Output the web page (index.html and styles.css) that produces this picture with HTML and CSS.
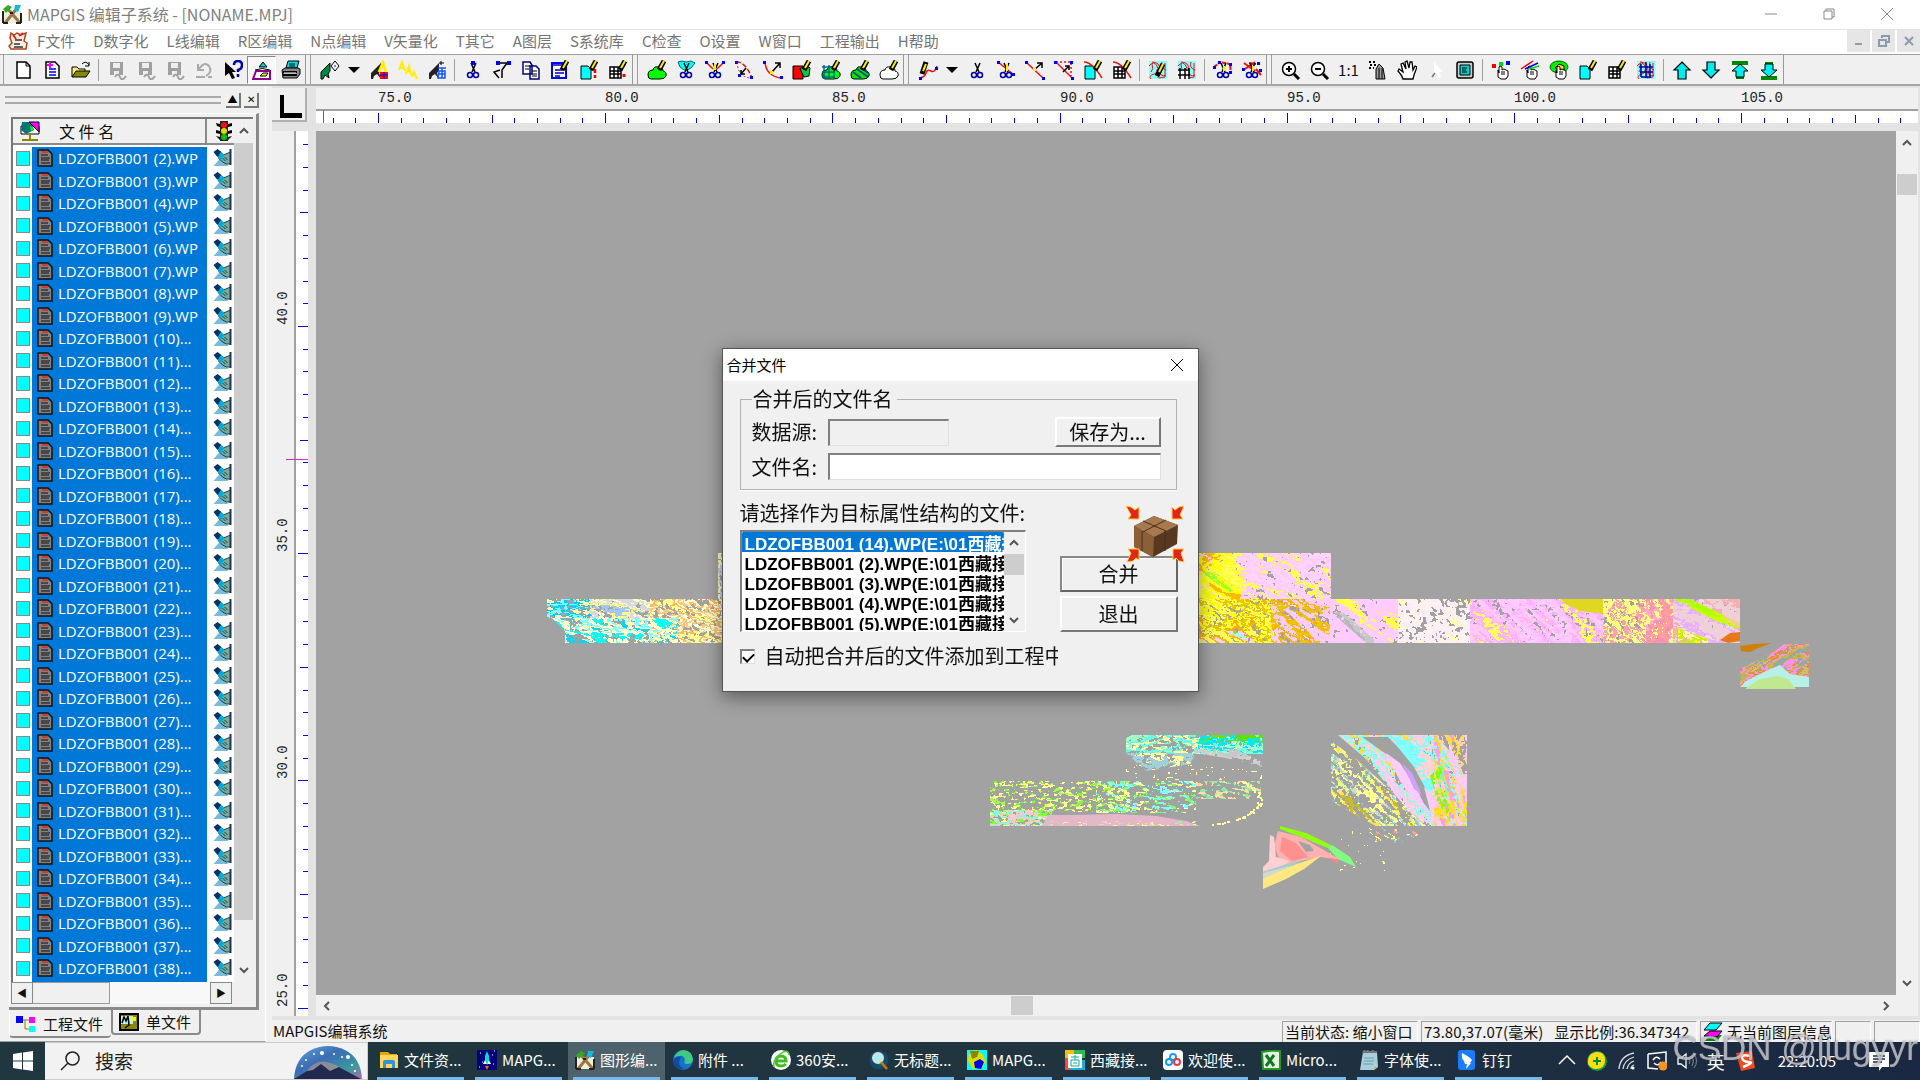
FILE: index.html
```html
<!DOCTYPE html>
<html lang="zh-CN">
<head>
  <meta charset="UTF-8">
  <title>MAPGIS 编辑子系统</title>
  <link rel="stylesheet" href="styles.css">
</head>
<body>
  <!-- icon sprite -->
  <svg class="sprite" aria-hidden="true">
    <defs>
      <g id="pencil"><path d="M17 1l-5 9" stroke="#000" stroke-width="5"/><path d="M17 1l-4 7" stroke="#fe0" stroke-width="2"/></g>
      <g id="shears" fill="none"><path d="M8 3l4 9M13 3l-4 9" stroke="#000" stroke-width="1.500"/><circle cx="7" cy="15" r="2.500" stroke="#00a" stroke-width="1.500"/><circle cx="13" cy="15" r="2.500" stroke="#00a" stroke-width="1.500"/></g>
      <g id="grid"><path d="M2 7h11v11H2z" fill="#fff" stroke="#000" stroke-width="1.500"/><path d="M2 11h11M2 14h11M6 7v11M10 7v11" stroke="#000" stroke-width="1.500"/></g>
      <g id="page"><path d="M2 6h7l3 3v10H2z" fill="#0ff" stroke="#000"/></g>
      <path id="blob" d="M1 15q0-5 5-5 1-4 5-3 5 0 5 4 4 1 3 5-1 3-6 3H4q-3 0-3-4z" stroke="#000"/>
      <g id="smallhand"><path d="M7 10v7l3 2h5l2-3v-5l-2-1-2-1-2 1V7l-2-1-1 1v6z" fill="#fff" stroke="#000"/><path d="M11 11v4M13 11v4" stroke="#000"/></g>
      <path id="arrowman" d="M2 19V13L12 3v7l-2 3 2 6-4-5-3 2-1 3z"/>
      <g id="disk"><path d="M3 2h13v13H3z" fill="#a0a0a0"/><path d="M6 3h7v5H6z" fill="#eee"/><path d="M7 11h5v4H7z" fill="#eee"/><path d="M8 17q3-5 5 0t6-1" stroke="#a0a0a0" stroke-width="2" fill="none"/></g>
      <g id="contour"><path d="M1 1h18v18H1z" fill="#8ff"/><path d="M1 6q5-6 8 0t-3 8-3 5M4 2q8 0 8 8t6 5M14 2q-2 6 4 8M8 10q5 1 2 8M3 12q3-3 1-8M17 3v14l-6 1" fill="none" stroke="#e11"/></g>
    </defs>
    <symbol id="i-app" viewBox="0 0 20 20"><path d="M1 7h18v12H1z" fill="#eed"/><path d="M3 19L16 3M18 19L5 4" stroke="#974" stroke-width="3"/><path d="M1 5l5-4 4 2-6 6z" fill="#3a2"/><path d="M13 1h6l-3 7-4-2z" fill="#1bd"/><path d="M1 19h5M14 19h5M1 7v12M19 9v10M8 9h3" stroke="#222" stroke-width="2"/></symbol>
    <symbol id="i-scroll" viewBox="0 0 20 20"><path d="M3 2l3 2 3-2 4 2 5-2-2 8 3 2-1 6H3l-2-3 3-3-2-5z" fill="#fed" stroke="#a42" stroke-width="1.500"/><path d="M7 9h7M6 13h6M6 16h9" stroke="#333" stroke-width="1.500"/><path d="M5 4l3 4M11 5l4-3" stroke="#e22" stroke-width="2"/></symbol>
    <symbol id="i-new" viewBox="0 0 20 20"><path d="M4 2h9l4 4v12H4z" fill="#fff" stroke="#000" stroke-width="1.500"/><path d="M13 2v4h4" fill="none" stroke="#000"/></symbol>
    <symbol id="i-newdoc" viewBox="0 0 20 20"><path d="M4 2h9l4 4v12H4z" fill="#fff" stroke="#000" stroke-width="1.500"/><path d="M7 9h7M7 12h7M7 15h7" stroke="#00f" stroke-width="1.500"/><path d="M5 5h6M8 2v6" stroke="#f0f" stroke-width="2"/></symbol>
    <symbol id="i-open" viewBox="0 0 20 20"><path d="M1 17V7h5l2 2h6v3" fill="#fe7" stroke="#000"/><path d="M1 17l4-6h14l-4 6z" fill="#880" stroke="#000"/><path d="M11 4q4-4 7 1m0-3v4h-4" fill="none" stroke="#000"/></symbol>
    <symbol id="i-save" viewBox="0 0 20 20"><use href="#disk"/></symbol>
    <symbol id="i-undo" viewBox="0 0 20 20"><path d="M5 9Q10 1 15 6q4 6-3 10M4 4v6h6M2 17h9M14 17h4" fill="none" stroke="#aaa" stroke-width="2"/></symbol>
    <symbol id="i-help" viewBox="0 0 20 20"><path d="M2 2v14l4-3 3 6 3-1-3-6h4z" fill="#000"/><path d="M11 5q0-4 4-4t4 4-4 5v2M15 14v3" fill="none" stroke="#00a" stroke-width="2.500"/></symbol>
    <symbol id="i-gis" viewBox="0 0 20 20"><path d="M7 7l4-5 4 5z" fill="#0cc" stroke="#000"/><path d="M3 10q7-3 15 0" fill="none" stroke="#000"/><path d="M1 19l3-8h14v8z" fill="#fff" stroke="#808" stroke-width="2"/><path d="M8 16l3-3h5l-2 3z" fill="#fe0" stroke="#000"/></symbol>
    <symbol id="i-print" viewBox="0 0 20 20"><path d="M5 8l2-7h11l-2 7z" fill="#0dd" stroke="#000"/><path d="M1 10l3-2h13l2 1v5l-3 4H2z" fill="#888" stroke="#000"/><path d="M2 12h14M2 15h14" stroke="#000" stroke-width="2"/><path d="M3 13h12" stroke="#fff"/><path d="M8 4h6M8 6h6" stroke="#000"/></symbol>
    <symbol id="i-flag" viewBox="0 0 20 20"><path d="M1 19v-7L10 3v8l-2 3 1 4-4-3-2 4z" fill="#084" stroke="#000"/><path d="M11 6l4-5 4 5-4 5z" fill="#fff" stroke="#000"/><path d="M14 6h2" stroke="#00f"/></symbol>
    <symbol id="i-flaga" viewBox="0 0 20 20"><use href="#arrowman" fill="#222"/><path d="M10 12l4-9 3 9" fill="none" stroke="#fe0" stroke-width="3"/><path d="M11 12h8v7h-8z" fill="#e11"/><path d="M11 15h8M15 12v7" stroke="#00f"/></symbol>
    <symbol id="i-aa" viewBox="0 0 20 20"><path d="M1 10L4 2l3 9M2 8h4M8 14l3-8 2 9M9 11h3M14 17l2-5 3 7" fill="none" stroke="#fe0" stroke-width="2"/></symbol>
    <symbol id="i-flagw" viewBox="0 0 20 20"><use href="#arrowman" fill="#222"/><path d="M14 1v4M12 3h5" stroke="#000"/><path d="M11 8h8M12 11h6v7h-7zM12 14h6M15 8v10" fill="none" stroke="#15f" stroke-width="1.500"/></symbol>
    <symbol id="i-cutpt" viewBox="0 0 20 20"><use href="#shears"/><path d="M8 1h4v4H8z" fill="#00f"/></symbol>
    <symbol id="i-node" viewBox="0 0 20 20"><path d="M5 3h12M15 3L10 10v8M8 10l-6 2 5 6" fill="none" stroke="#000" stroke-width="1.500"/><path d="M4 1h4v4H4zM15 1h4v4h-4z" fill="#00f"/></symbol>
    <symbol id="i-copy" viewBox="0 0 20 20"><path d="M2 2h7l2 3v9H2zM9 6h6l3 3v10H9z" fill="#fff" stroke="#000080" stroke-width="1.500"/><path d="M4 6h5M4 9h4M11 11h5M11 14h5M11 16h5" stroke="#000"/></symbol>
    <symbol id="i-text" viewBox="0 0 20 20"><path d="M2 3h14v15H2z" fill="#fff" stroke="#00f" stroke-width="2"/><path d="M2 5h14M5 10h8M5 13h9M5 16h5" stroke="#00a" stroke-width="1.500"/><use href="#pencil"/></symbol>
    <symbol id="i-pagep" viewBox="0 0 20 20"><use href="#page"/><use href="#pencil"/></symbol>
    <symbol id="i-pager" viewBox="0 0 20 20"><use href="#page"/><use href="#pencil"/><path d="M16 9v4M16 15v3" stroke="#e00" stroke-width="2.500"/></symbol>
    <symbol id="i-gridp" viewBox="0 0 20 20"><use href="#grid"/><use href="#pencil"/></symbol>
    <symbol id="i-gridr" viewBox="0 0 20 20"><use href="#grid"/><use href="#pencil"/><path d="M16 14v3" stroke="#e00" stroke-width="3"/></symbol>
    <symbol id="i-area" viewBox="0 0 20 20"><use href="#blob" fill="#0f0"/><use href="#pencil"/></symbol>
    <symbol id="i-areacut" viewBox="0 0 20 20"><path d="M2 2l4-1 4 1 5-1 4 2-4 5-4 2H8L4 7z" fill="#0ff" stroke="#066"/><use href="#shears"/></symbol>
    <symbol id="i-arccut" viewBox="0 0 20 20"><path d="M1 2l7 7M19 2l-7 7" stroke="#e11" stroke-width="1.500"/><path d="M0 1h3v3H0zM17 1h3v3h-3z" fill="#00f"/><use href="#shears"/><path d="M10 4v6" stroke="#fe0" stroke-width="2"/></symbol>
    <symbol id="i-arcmove" viewBox="0 0 20 20"><path d="M2 2q9-1 16 16" fill="none" stroke="#e11" stroke-width="1.500" stroke-dasharray="5 2"/><path d="M3 2q1 16 15 16" fill="none" stroke="#e11" stroke-dasharray="2 2"/><path d="M12 8l-5 6m0-4v4h4" fill="none" stroke="#000" stroke-width="1.500"/><path d="M1 1h3v3H1zM16 16h3v3h-3zM4 14h3v3H4z" fill="#00f"/></symbol>
    <symbol id="i-arcadd" viewBox="0 0 20 20"><path d="M2 2q1 14 16 16" fill="none" stroke="#e11" stroke-width="1.500"/><path d="M9 12l8-9m-5 0h5v5" fill="none" stroke="#000" stroke-width="1.500"/><path d="M7 11h3v3H7z" fill="#fe0"/><path d="M0 1h3v3H0zM17 16h3v3h-3z" fill="#00f"/></symbol>
    <symbol id="i-arearep" viewBox="0 0 20 20"><path d="M1 6h10v13H1z" fill="#f00" stroke="#000"/><path d="M8 9l6-4 4 3-1 8-5 1z" fill="#0c4" stroke="#000"/><use href="#pencil"/></symbol>
    <symbol id="i-areagrid" viewBox="0 0 20 20"><use href="#blob" fill="#0f0"/><path d="M1 7h13M1 12h13M1 17h13M3 5v14M8 5v14M13 5v14" stroke="#068" stroke-width="1.500"/><use href="#pencil"/></symbol>
    <symbol id="i-areahatch" viewBox="0 0 20 20"><use href="#blob" fill="#0e0"/><path d="M3 12l8 6M7 9l11 8M12 8l6 5" stroke="#048" stroke-width="2"/><use href="#pencil"/></symbol>
    <symbol id="i-areaempty" viewBox="0 0 20 20"><use href="#blob" fill="#fff"/><use href="#pencil"/></symbol>
    <symbol id="i-line" viewBox="0 0 20 20"><path d="M2 18q5-1 6-5t5-2 6-5" fill="none" stroke="#e11" stroke-width="1.500"/><path d="M8 2L4 14" stroke="#000" stroke-width="5"/><path d="M8 4L5 11" stroke="#fe0" stroke-width="2"/><path d="M1 17h3v3H1zM17 7h3v3h-3z" fill="#00f"/></symbol>
    <symbol id="i-cut" viewBox="0 0 20 20"><use href="#shears"/></symbol>
    <symbol id="i-linecut" viewBox="0 0 20 20"><path d="M2 2l16 13" stroke="#e11" stroke-width="1.500"/><use href="#shears"/><path d="M11 4v7" stroke="#fe0" stroke-width="2"/><path d="M1 1h3v3H1zM16 13h3v3h-3z" fill="#00f"/></symbol>
    <symbol id="i-lineadd" viewBox="0 0 20 20"><path d="M1 2l17 16" stroke="#e11" stroke-width="1.500"/><path d="M9 10l8-7m-5 0h5v5" fill="none" stroke="#000" stroke-width="1.500"/><path d="M8 8h3v3H8z" fill="#fe0"/><path d="M0 1h3v3H0zM17 17h3v3h-3z" fill="#00f"/></symbol>
    <symbol id="i-linemove" viewBox="0 0 20 20"><path d="M2 2h15v14" fill="none" stroke="#e11" stroke-width="1.500" stroke-dasharray="2 2"/><path d="M2 2l16 16" stroke="#e11" stroke-width="1.500"/><path d="M9 12l6-6m-4 0h4v4" fill="none" stroke="#000" stroke-width="1.500"/><path d="M0 1h3v3H0zM17 17h3v3h-3zM16 1h3v3h-3z" fill="#00f"/></symbol>
    <symbol id="i-linepage" viewBox="0 0 20 20"><use href="#page"/><path d="M1 2q8 0 18 16" fill="none" stroke="#e11" stroke-width="1.500"/><use href="#pencil"/></symbol>
    <symbol id="i-linegrid" viewBox="0 0 20 20"><use href="#grid"/><path d="M1 2q8 0 18 16" fill="none" stroke="#e11" stroke-width="1.500"/><use href="#pencil"/></symbol>
    <symbol id="i-contour" viewBox="0 0 20 20"><use href="#contour"/><path d="M15 4l-6 12" stroke="#000" stroke-width="5"/><path d="M15 4l-4 8" stroke="#fe0" stroke-width="2"/></symbol>
    <symbol id="i-contgrid" viewBox="0 0 20 20"><use href="#contour"/><path d="M1 9h11v10H1z" fill="#fff"/><path d="M1 10h12M1 15h12M3 8v11M8 8v11M12 8v11" stroke="#000" stroke-width="1.500"/></symbol>
    <symbol id="i-topocut" viewBox="0 0 20 20"><path d="M1 7l6-5 10 2 1 9" fill="none" stroke="#e11" stroke-width="2" stroke-dasharray="4 1"/><path d="M5 1h3v3H5zM16 3h3v3h-3zM0 6h3v3H0zM16 11h3v3h-3z" fill="#00f"/><use href="#shears"/><path d="M11 6v5" stroke="#fe0" stroke-width="2"/></symbol>
    <symbol id="i-topocut2" viewBox="0 0 20 20"><path d="M2 3l11 8M13 2L3 9M14 9l5 6M7 3l7 1" fill="none" stroke="#e11" stroke-width="2"/><path d="M15 2h3v3h-3zM0 8h3v3H0zM17 9h3v3h-3z" fill="#00f"/><use href="#shears"/><path d="M11 6v5" stroke="#fe0" stroke-width="2"/></symbol>
    <symbol id="i-zoomin" viewBox="0 0 20 20"><circle cx="8" cy="9" r="6.500" fill="#fff" stroke="#000" stroke-width="1.500"/><path d="M5 9h6M8 6v6" stroke="#000" stroke-width="2"/><path d="M13 14l5 5" stroke="#000" stroke-width="3"/></symbol>
    <symbol id="i-zoomout" viewBox="0 0 20 20"><circle cx="8" cy="9" r="6.500" fill="#fff" stroke="#000" stroke-width="1.500"/><path d="M5 9h6" stroke="#000" stroke-width="2"/><path d="M13 14l5 5" stroke="#000" stroke-width="3"/></symbol>
    <symbol id="i-spray" viewBox="0 0 20 20"><path d="M8 19V9l3-5 4 4 2 11z" fill="#999" stroke="#000"/><path d="M11 8v11M14 8v11" stroke="#000"/><path d="M1 2h2M5 2h2M2 5h2M6 5h2M1 8h2M5 8h1" stroke="#000" stroke-width="2"/></symbol>
    <symbol id="i-hand" viewBox="0 0 20 20"><path d="M6 19q-1-4-5-8l1-2 4 3-2-8 2-1 3 6-1-7 2-1 2 7 1-6h2l1 8 2-4 2 1-3 8-1 4z" fill="#fff" stroke="#000" stroke-width="1.300"/></symbol>
    <symbol id="i-cursor" viewBox="0 0 20 20"><path d="M8 2v14l3-3 2 5 2-1-2-5h4z" fill="#fff"/><path d="M6 17l3-4" stroke="#777" stroke-width="1.500"/></symbol>
    <symbol id="i-screen" viewBox="0 0 20 20"><rect x="2" y="2" width="16" height="16" rx="2" fill="#ccc" stroke="#000" stroke-width="1.500"/><path d="M5 5h10v10H5z" fill="#0cc" stroke="#000"/><path d="M7 8h5M7 10h4M7 12h5" stroke="#000"/></symbol>
    <symbol id="i-pickpt" viewBox="0 0 20 20"><use href="#smallhand"/><path d="M1 4h4v4H1z" fill="#e00"/><path d="M8 2h4v4H8z" fill="#0d0"/><path d="M15 1h4v4h-4z" fill="#00f"/></symbol>
    <symbol id="i-pickline" viewBox="0 0 20 20"><use href="#smallhand"/><path d="M1 9L13 1" stroke="#e00" stroke-width="1.500"/><path d="M5 9l13-6" stroke="#00f" stroke-width="1.500"/><path d="M9 9l10-3" stroke="#0d0" stroke-width="1.500"/></symbol>
    <symbol id="i-pickarea" viewBox="0 0 20 20"><ellipse cx="10" cy="7" rx="9" ry="6" fill="#0e0" stroke="#060"/><path d="M6 8l4-4 5 2v4z" fill="#fe0" stroke="#000"/><use href="#smallhand"/></symbol>
    <symbol id="i-pickall" viewBox="0 0 20 20"><use href="#contour"/><path d="M3 7h14M4 12h13M10 2v16M5 17h10M5 4v13M14 4v13" stroke="#009" stroke-width="1.500"/></symbol>
    <symbol id="i-up" viewBox="0 0 20 20"><path d="M10 2l8 8h-4v9H6v-9H2z" fill="#0ee" stroke="#000" stroke-width="1.200"/></symbol>
    <symbol id="i-down" viewBox="0 0 20 20"><path d="M10 18l8-8h-4V2H6v8H2z" fill="#0ee" stroke="#000" stroke-width="1.200"/></symbol>
    <symbol id="i-top" viewBox="0 0 20 20"><path d="M2 1h16v4H2zM6 16h8v3H6z" fill="#080"/><path d="M10 4l8 7h-4v6H6v-6H2z" fill="#0ee" stroke="#000"/></symbol>
    <symbol id="i-bottom" viewBox="0 0 20 20"><path d="M2 16h16v4H2zM6 2h8v3H6z" fill="#080"/><path d="M10 17l8-7h-4V4H6v6H2z" fill="#0ee" stroke="#000"/></symbol>

    <symbol id="i-book" viewBox="0 0 20 20"><path d="M1 5h18v8H1z" fill="#fff" stroke="#000"/><path d="M2 1h8l4 8-8 4-5-4z" fill="#077"/><path d="M9 1h10v10z" fill="#f0f" stroke="#000"/><path d="M10 5l4 2-3 4z" fill="#0f0"/><path d="M2 19h16M10 12v6" stroke="#880" stroke-width="2"/></symbol>
    <symbol id="i-light" viewBox="0 0 16 20"><path d="M0 2l4 1v3L1 5zM16 2l-4 1v3l4-1zM0 9l4 1v3l-4-1zM16 9l-4 1v3l4-1zM0 15l4 1v3zM16 15l-4 1v3z" fill="#000"/><path d="M4 0h8v20H4z" fill="#222"/><circle cx="8" cy="4" r="3" fill="#e11"/><circle cx="8" cy="10" r="3" fill="#dd0"/><circle cx="8" cy="16" r="3" fill="#0c0"/></symbol>
    <symbol id="i-doc" viewBox="0 0 16 18"><path d="M1 1h10l4 4v12H1z" fill="#808080" stroke="#111" stroke-width="1.500"/><path d="M5 3h6" stroke="#e22" stroke-width="1.500"/><path d="M4 6h7M4 9h9M4 11h8M4 14h9" stroke="#111"/></symbol>
    <symbol id="i-edit" viewBox="0 0 18 18"><path d="M0 17l7-8 8 8z" fill="#7bd"/><path d="M5 6h5l7-3v12h-4l-4-2-4-4z" fill="#7a9" stroke="#145"/><path d="M0 3l4-3 4 3-4 5z" fill="#036"/><path d="M4 8l4-5 3 3-4 5z" fill="#0ad"/><path d="M17 0v16" stroke="#235" stroke-width="2"/><path d="M9 9l3 3M11 8l3 3" stroke="#245"/></symbol>
    <symbol id="i-tree" viewBox="0 0 20 18"><path d="M7 5h6M9 5v9h5" fill="none" stroke="#880"/><path d="M0 1h7v7H0z" fill="#00f"/><path d="M13 2h6v6h-6z" fill="#f0f"/><path d="M13 11h6v6h-6z" fill="#0ff"/></symbol>
    <symbol id="i-single" viewBox="0 0 20 18"><path d="M1 1h18v16H1z" fill="#880" stroke="#000" stroke-width="2"/><path d="M2 3h12v8H2z" fill="#bee"/><path d="M3 10l2-6 2 4 2-5 1 9-4 3" fill="none" stroke="#000" stroke-width="1.500"/><path d="M13 4h4v4h-4z" fill="#fe0"/></symbol>
    <symbol id="i-layers" viewBox="0 0 20 20"><path d="M2 19l5-6h12l-5 6z" fill="#080"/><path d="M1 14l6-5h12l-5 6z" fill="#f0f" stroke="#000"/><path d="M1 8l6-7h12l-6 7z" fill="#0ff" stroke="#000"/></symbol>

    <symbol id="i-folder" viewBox="0 0 20 20"><path d="M1 2h8l2 2h7v5H1z" fill="#e5a50a"/><path d="M1 5h18v13H1z" fill="#ffd65c"/><path d="M4 18v-6q0-2 2-2h8q2 0 2 2v6h-3v-4H7v4z" fill="#2f93dd"/></symbol>
    <symbol id="i-rocket" viewBox="0 0 20 20"><path d="M0 0h20v20H0z" fill="#01017a"/><path d="M3 3h1M15 5h1M5 12h1M16 14h1M2 17h1M17 1h1" stroke="#fff"/><path d="M10 1l2 5v8H8V6z" fill="#0dd"/><path d="M6 14l2-4 2 5 2-5 2 4z" fill="#fff"/><path d="M8 16h4l-2 4z" fill="#f60"/></symbol>
    <symbol id="i-edge" viewBox="0 0 20 20"><circle cx="10" cy="10" r="10" fill="#1573c9"/><path d="M1 8Q4 0 11 0q8 1 9 9 0 5-6 5-4 0-2-4-1-5-6-4-3 0-5 2z" fill="#41c983"/><path d="M7 9q-3 6 4 10-9 1-11-8 2-5 8-4z" fill="#114a9e"/></symbol>
    <symbol id="i-360" viewBox="0 0 20 20"><circle cx="10" cy="10" r="10" fill="#fff"/><path d="M5 11h10q0-5-5-5t-5 5 5 5q3 0 5-2" fill="none" stroke="#4b2" stroke-width="3"/><path d="M3 17q-2-7 6-13t9 1" fill="none" stroke="#5c3" stroke-width="1.500"/></symbol>
    <symbol id="i-lens" viewBox="0 0 20 20"><circle cx="10" cy="10" r="9.500" fill="#124b70"/><path d="M2 9q5-6 9-3l5 6-5 5z" fill="#164"/><circle cx="9" cy="8" r="5" fill="#aee" stroke="#ddd" stroke-width="2"/><path d="M12 12l6 7" stroke="#c71" stroke-width="2.500"/></symbol>
    <symbol id="i-mapgis" viewBox="0 0 20 20"><path d="M0 0h20v20H0z" fill="#0ff"/><path d="M2 3l7-3 6 4 4 7-4 7-9 1-5-8z" fill="#dd0"/><path d="M3 1h9l-2 6-5 2z" fill="#880"/><path d="M7 12l6-3 4 3-3 7-6-1z" fill="#00e"/></symbol>
    <symbol id="i-xizang" viewBox="0 0 20 20"><path d="M0 0h7v20H0z" fill="#f44"/><path d="M5 0h15v8H5z" fill="#3b5"/><path d="M0 0h9v8H0z" fill="#fb0"/><path d="M4 10h16v10H4z" fill="#2ad"/><rect x="3" y="4" width="14" height="14" fill="#fff"/><path d="M6 7h8M10 5v5M6 10h8v6H6zM8 13h4" fill="none" stroke="#1a9"/></symbol>
    <symbol id="i-baidu" viewBox="0 0 20 20"><rect width="20" height="20" rx="4" fill="#fff"/><circle cx="10" cy="7" r="3" fill="none" stroke="#29f" stroke-width="2"/><circle cx="6" cy="12" r="3" fill="none" stroke="#19e" stroke-width="2"/><circle cx="14" cy="12" r="3" fill="none" stroke="#e34" stroke-width="2"/></symbol>
    <symbol id="i-excel" viewBox="0 0 20 20"><path d="M1 2q9-2 18-1v18H2z" fill="#e6f2df" stroke="#292" stroke-width="2"/><path d="M5 5l8 11M13 5L5 16" stroke="#172" stroke-width="3"/></symbol>
    <symbol id="i-note" viewBox="0 0 20 20"><path d="M4 2h14l1 15-4 3H1z" fill="#a8cfdc"/><path d="M4 2h14M4 3l2-3M8 3l1-3M13 3l1-3" stroke="#777" stroke-width="2"/><path d="M5 8h10M5 11h10M4 14h10" stroke="#6a9eb0"/><path d="M19 17l-4 3v-3z" fill="#ca7"/></symbol>
    <symbol id="i-ding" viewBox="0 0 20 20"><rect x="1" width="17" height="20" rx="3" fill="#1a7cff"/><path d="M5 3q8 4 10 7l-2 3h1l-5 6 1-5H8l-1-3q-3-3-2-8z" fill="#fff"/></symbol>
  </svg>

  <header class="titlebar">
    <svg class="ico"><use href="#i-app"/></svg>
    <span class="title">MAPGIS 编辑子系统 - [NONAME.MPJ]</span>
    <div class="win-controls">
      <button aria-label="最小化"><svg viewBox="0 0 12 12"><path d="M0 6h12"/></svg></button>
      <button aria-label="还原"><svg viewBox="0 0 12 12"><path d="M3 3V1h8v8H9M1 3h8v8H1z"/></svg></button>
      <button aria-label="关闭"><svg viewBox="0 0 12 12"><path d="M0 0l12 12M12 0L0 12"/></svg></button>
    </div>
  </header>

  <nav class="menubar">
    <svg class="ico"><use href="#i-scroll"/></svg>
    <a href="#">F文件</a>
    <a href="#">D数字化</a>
    <a href="#">L线编辑</a>
    <a href="#">R区编辑</a>
    <a href="#">N点编辑</a>
    <a href="#">V矢量化</a>
    <a href="#">T其它</a>
    <a href="#">A图层</a>
    <a href="#">S系统库</a>
    <a href="#">C检查</a>
    <a href="#">O设置</a>
    <a href="#">W窗口</a>
    <a href="#">工程输出</a>
    <a href="#">H帮助</a>
    <div class="mdi-controls">
      <button aria-label="最小化子窗口"><svg viewBox="0 0 12 12"><path d="M2 9h7"/></svg></button>
      <button aria-label="还原子窗口"><svg viewBox="0 0 12 12"><path d="M4 3V1h7v6H9M1 5h7v6H1z"/></svg></button>
      <button aria-label="关闭子窗口"><svg viewBox="0 0 12 12"><path d="M2 2l8 8M10 2l-8 8"/></svg></button>
    </div>
  </nav>

  <div class="toolbar" id="toolbar"></div>

  <main class="workspace">
    <aside class="dock">
      <div class="dock-head">
        <div class="grip"></div>
        <button aria-label="收起">▲</button>
        <button aria-label="关闭">✕</button>
      </div>
      <div class="dock-frame">
        <div class="list-row">
          <div class="list">
            <div class="list-head">
              <div class="col-name"><svg class="ico"><use href="#i-book"/></svg><span>文 件 名</span></div>
              <div class="col-state"><svg><use href="#i-light"/></svg></div>
            </div>
            <ul class="files" id="files"></ul>
          </div>
          <div class="vscroll">
            <svg class="chev" viewBox="0 0 10 10"><path d="M1 7l4-4 4 4"/></svg>
            <div class="thumb"></div>
            <svg class="chev" viewBox="0 0 10 10"><path d="M1 3l4 4 4-4"/></svg>
          </div>
        </div>
        <div class="old-hscroll">
          <button aria-label="向左">◀</button>
          <div class="thumb"></div>
          <button aria-label="向右">▶</button>
        </div>
      </div>
      <div class="tabs">
        <button class="tab active"><svg><use href="#i-tree"/></svg>工程文件</button>
        <button class="tab"><svg><use href="#i-single"/></svg>单文件</button>
      </div>
    </aside>

    <section class="view">
      <div class="top-row">
        <div class="corner"></div>
        <svg class="ruler-top" id="rulerTop"></svg>
      </div>
      <div class="mid-row">
        <svg class="ruler-left" id="rulerLeft"></svg>
        <div class="map-col">
          <div class="map-row">
            <div class="map" id="map"><canvas id="mapCanvas"></canvas></div>
            <div class="vscroll">
              <svg class="chev" viewBox="0 0 10 10"><path d="M1 7l4-4 4 4"/></svg>
              <div class="thumb"></div>
              <svg class="chev" viewBox="0 0 10 10"><path d="M1 3l4 4 4-4"/></svg>
            </div>
          </div>
          <div class="hscroll">
            <svg class="chev" viewBox="0 0 10 10"><path d="M7 1L3 5l4 4"/></svg>
            <div class="thumb"></div>
            <svg class="chev" viewBox="0 0 10 10"><path d="M3 1l4 4-4 4"/></svg>
          </div>
        </div>
      </div>
      <footer class="status">
        <span class="status-text">MAPGIS编辑系统</span>
        <span class="pane pane-state">当前状态: 缩小窗口</span>
        <span class="pane pane-coord"><span>73.80,37.07(毫米)</span><span>显示比例:36.347342</span></span>
        <span class="pane pane-layer"><svg class="ico"><use href="#i-layers"/></svg>无当前图层信息</span>
        <span class="pane pane-small"></span>
        <span class="pane pane-last"></span>
      </footer>
    </section>
  </main>

  <div class="taskbar">
    <button class="start" aria-label="开始"><svg viewBox="0 0 20 20"><path d="M0 3l9-1.500v8H0zM10 1.400L20 0v9.500H10zM0 10.500h9v8L0 17zM10 10.500h10V20l-10-1.400z" fill="#fff"/></svg></button>
    <div class="search">
      <svg class="search-ico" viewBox="0 0 20 20"><circle cx="12.500" cy="7.500" r="6.500"/><path d="M8 12l-7 7"/></svg>
      <input type="text" value="搜索" aria-label="搜索">
      <svg class="search-art" viewBox="0 0 68 33">
        <defs>
          <linearGradient id="sky" x1="0" x2="1" y1="0" y2="1"><stop offset="0" stop-color="#5da8de"/><stop offset=".4" stop-color="#3c6db4"/><stop offset=".75" stop-color="#3a9b9c"/><stop offset="1" stop-color="#b56aa5"/></linearGradient>
        </defs>
        <path d="M0 33Q1 12 17 4q17-8 34 0 16 8 17 29z" fill="url(#sky)"/>
        <path d="M8 33q10-20 25-17t26 17z" fill="#d49a8c" opacity=".5"/>
        <path d="M0 33l13-8 6-1 8-6 9 7 9-4 22 12z" fill="#23284f"/>
        <g fill="#fff"><circle cx="20" cy="8" r="1"/><circle cx="28" cy="7" r="2"/><circle cx="40" cy="8" r="1"/><circle cx="48" cy="11" r="1"/><circle cx="54" cy="11" r="2"/><circle cx="58" cy="19" r="1"/><circle cx="12" cy="14" r="1"/><circle cx="8" cy="20" r="1"/><circle cx="61" cy="25" r="1"/></g>
      </svg>
    </div>
    <div class="tasks" id="tasks"></div>
    <div class="tray">
      <svg viewBox="0 0 20 20"><path d="M2 13l8-8 8 8" fill="none" stroke="#fff" stroke-width="1.500"/></svg>
      <svg viewBox="0 0 20 20"><circle cx="10" cy="10" r="10" fill="#0b9f4a"/><path d="M1 13Q0 2 10 1q8 0 8 8 0 9-9 9-5 0-8-5z" fill="#fd1"/><path d="M10 6v8M6 10h8" stroke="#084" stroke-width="2"/></svg>
      <svg viewBox="0 0 20 20"><path d="M2 18Q3 5 17 2M6 18q1-9 11-12M10 18q1-6 7-8M14 18q0-3 3-4" fill="none" stroke="#ddd" stroke-width="1.300"/><circle cx="16" cy="17" r="1.500" fill="#fff"/></svg>
      <svg viewBox="0 0 20 20"><path d="M1 3l18-2v12M1 3v14l10 1" fill="none" stroke="#fff" stroke-width="1.500"/><path d="M6 9q3-5 7-1M14 11q-3 5-7 1" fill="none" stroke="#fff" stroke-width="1.500"/><circle cx="16" cy="15" r="4.500" fill="#f7941d"/></svg>
      <svg viewBox="0 0 20 20"><path d="M1 7h3l5-4v14l-5-4H1z" fill="none" stroke="#fff" stroke-width="1.300"/><path d="M12 7q2 3 0 6M15 5q3 5 0 10M17 3q5 7 0 14" fill="none" stroke="#7b8797"/></svg>
      <span class="ime">英</span>
      <svg viewBox="0 0 20 20"><path d="M1 2l16-2 3 17-14 3z" fill="#f04a1d"/><path d="M15 5Q6 3 7 7t7 4-6 5" fill="none" stroke="#fff" stroke-width="2.500"/></svg>
      <span class="clock">22:20:05</span>
      <svg class="notify" viewBox="0 0 20 20"><path d="M0 1h20v15h-7l-3 4v-4H0z" fill="#fff"/><path d="M4 5h12M4 8h12M4 11h9" stroke="#1b2b40" stroke-width="1.500"/></svg>
    </div>
  </div>

  <div class="overlay">
    <div class="dialog" role="dialog" aria-labelledby="dlgTitle">
      <div class="dialog-title">
        <span id="dlgTitle">合并文件</span>
        <button aria-label="关闭"><svg viewBox="0 0 12 12"><path d="M0 0l12 12M12 0L0 12"/></svg></button>
      </div>
      <form class="dialog-body">
        <fieldset>
          <legend>合并后的文件名</legend>
          <div class="field">
            <label for="source">数据源:</label>
            <input type="text" id="source" class="source" disabled>
            <button type="button" class="btn btn-save">保存为...</button>
          </div>
          <div class="field">
            <label for="fname">文件名:</label>
            <input type="text" id="fname" class="fname">
          </div>
        </fieldset>
        <label class="list-label" for="target">请选择作为目标属性结构的文件:</label>
        <div class="merge-row">
          <div class="listbox">
            <select id="target" size="5">
              <option selected>LDZOFBB001 (14).WP(E:\01西藏接图</option>
              <option>LDZOFBB001 (2).WP(E:\01西藏接图</option>
              <option>LDZOFBB001 (3).WP(E:\01西藏接图</option>
              <option>LDZOFBB001 (4).WP(E:\01西藏接图</option>
              <option>LDZOFBB001 (5).WP(E:\01西藏接图</option>
            </select>
            <div class="vscroll">
              <svg class="chev" viewBox="0 0 10 10"><path d="M1 7l4-4 4 4"/></svg>
              <div class="thumb"></div>
              <svg class="chev" viewBox="0 0 10 10"><path d="M1 3l4 4 4-4"/></svg>
            </div>
          </div>
          <div class="actions">
            <button type="button" class="btn btn-default">合并</button>
            <button type="button" class="btn">退出</button>
            <svg class="box-art" viewBox="0 0 60 58">
              <path d="M9 21l20-10 24 9-1 19-24 13L9 42z" fill="#573820"/>
              <path d="M9 21l20-10 24 9-24 12z" fill="#a67a4e"/>
              <path d="M9 21l20 11-1 20L9 42z" fill="#8c5f38"/>
              <path d="M17 26v20M40 26v20M18 16l23 10M41 15L18 27" stroke="#4b2f18" fill="none"/>
              <g fill="#e1251b" stroke="#fc3" stroke-width="1"><path d="M1 1l5 1 4 3 4-3v12H3l3-4z"/><path d="M59 1l-5 1-4 3-3-3v12h11l-3-4z"/><path d="M2 57l6-1 3-3 3 2V44H3l3 4z"/><path d="M59 57l-5-1-3-3-3 2V44h11l-3 4z"/></g>
            </svg>
          </div>
        </div>
        <div class="check-row">
          <input type="checkbox" id="autoAdd" checked>
          <label for="autoAdd">自动把合并后的文件添加到工程中</label>
        </div>
      </form>
    </div>
  </div>

  <div class="watermark">CSDN @liugyyr</div>

  <script src="script.js"></script>
</body>
</html>
```
FILE: styles.css
```css
* {
  box-sizing: border-box;
}

body {
  margin: 0;
  height: 100vh;
  display: flex;
  flex-direction: column;
  overflow: hidden;
  background: #f0f0f0;
  font-family: "Noto Sans CJK SC", sans-serif;
  font-size: 15px;
  line-height: 20px;
  color: #111;
}

button,
input,
select {
  font: inherit;
  color: inherit;
}

button {
  padding: 0;
  border: none;
  background: none;
}

.sprite {
  position: absolute;
  width: 0;
  height: 0;
}

.ico {
  width: 20px;
  height: 20px;
  flex: none;
}

/* title bar */
.titlebar {
  display: flex;
  align-items: center;
  height: 30px;
  padding: 0 4px 2px 2px;
  background: #fff;
  border-bottom: 1px solid #e3e3e3;
  flex: none;
}

.title {
  margin-left: 5px;
  color: #808080;
  font-size: 16px;
}

.win-controls,
.mdi-controls {
  display: flex;
  margin-left: auto;
}

.win-controls button {
  width: 58px;
  height: 26px;
}

.win-controls svg,
.dialog-title svg {
  width: 12px;
  height: 12px;
  overflow: visible;
  fill: none;
  stroke: #888;
}

/* menu */
.menubar {
  display: flex;
  align-items: center;
  height: 25px;
  padding: 0 0 2px 8px;
  background: #fff;
  border-bottom: 1px solid #a0a0a0;
  flex: none;
}

.menubar a {
  padding: 0 9px;
  color: #757575;
  text-decoration: none;
}

.mdi-controls {
  gap: 2px;
}

.mdi-controls button {
  width: 23px;
  height: 22px;
  background: #e6e6e6;
}

.mdi-controls svg {
  width: 12px;
  height: 12px;
  fill: none;
  stroke: #8b9bab;
  stroke-width: 2;
}

/* toolbar */
.toolbar {
  display: flex;
  height: 31px;
  padding-left: 3px;
  border-bottom: 2px solid #a6a6a6;
  flex: none;
}

.tool-group {
  display: flex;
  align-items: center;
  padding-left: 5px;
  border-right: 1px solid #999;
  box-shadow: inset 1px 0 #a0a0a0;
  margin-right: 4px;
}

.tool {
  display: flex;
  align-items: center;
  justify-content: center;
  width: 29px;
  height: 28px;
}

.tool svg {
  width: 20px;
  height: 20px;
}

.tool.pressed {
  background: #f8f8f8;
  border: 1px solid;
  border-color: #888 #fff #fff #888;
}

.tool-drop {
  width: 20px;
}

.tool-drop svg {
  width: 12px;
}

.tool-sep {
  width: 1px;
  height: 22px;
  margin: 0 3px;
  background: #a0a0a0;
}

/* workspace */
.workspace {
  display: flex;
  flex: 1;
  min-height: 0;
}

.dock {
  display: flex;
  flex-direction: column;
  width: 266px;
  margin-right: 6px;
  padding: 0 6px 3px 9px;
  border-right: 1px solid #fff;
  border-bottom: 1px solid #a0a0a0;
  flex: none;
}

.dock-head {
  display: flex;
  align-items: center;
  gap: 3px;
  height: 27px;
  padding-top: 1px;
}

.grip {
  flex: 1;
  height: 8px;
  margin: 0 2px 0 -4px;
  border-top: 2px solid #aaa;
  border-bottom: 2px solid #aaa;
}

.dock-head button {
  width: 15px;
  height: 15px;
  border-right: 2px solid #777;
  border-bottom: 2px solid #777;
  font-size: 10px;
  line-height: 12px;
  color: #000;
}

.dock-frame {
  display: flex;
  flex-direction: column;
  flex: 1;
  min-height: 0;
  padding: 3px 3px 3px 2px;
  border-top: 1px solid #fff;
  border-right: 3px solid #8a8a8a;
  border-bottom: 3px solid #8a8a8a;
  box-shadow: inset 1px 0 #fff;
}

.list-row {
  display: flex;
  flex: 1;
  min-height: 0;
  border-top: 2px solid #777;
  border-left: 2px solid #777;
}

.list {
  display: flex;
  flex-direction: column;
  flex: 1;
  min-width: 0;
  background: #fff;
}

.list-head {
  display: flex;
  height: 26px;
  background: #f0f0f0;
  border-bottom: 2px solid #8a8a8a;
  flex: none;
}

.col-name {
  display: flex;
  align-items: center;
  gap: 19px;
  width: 194px;
  padding-left: 7px;
  border-right: 2px solid #8a8a8a;
  font-size: 16px;
}

.col-state {
  flex: 1;
  overflow: hidden;
  padding: 2px 0 0 9px;
}

.col-state svg {
  width: 16px;
  height: 20px;
}

.files {
  flex: 1;
  min-height: 0;
  margin: 0;
  padding: 2px 0 0;
  list-style: none;
  overflow: hidden;
}

.files li {
  display: flex;
  align-items: center;
  height: 22px;
}

.files li:nth-child(even) {
  height: 23px;
}

.files input {
  appearance: none;
  width: 14px;
  height: 15px;
  margin: 0 2px 0 3px;
  border: 1px solid #888;
  background: #0ff;
  flex: none;
}

.file-name {
  display: flex;
  align-items: center;
  gap: 5px;
  width: 175px;
  height: 100%;
  padding-left: 5px;
  background: #0078d7;
  color: #fff;
  font-family: "Open Sans", sans-serif;
  white-space: nowrap;
  flex: none;
}

.file-name svg {
  width: 16px;
  height: 18px;
  flex: none;
}

.file-state {
  width: 19px;
  height: 18px;
  margin-left: 6px;
  flex: none;
}

/* scroll bars */
.vscroll,
.hscroll {
  display: flex;
  align-items: center;
  background: #f0f0f0;
  flex: none;
}

.vscroll {
  flex-direction: column;
  width: 22px;
}

.hscroll {
  height: 21px;
}

.chev {
  width: 10px;
  height: 10px;
  margin: 7px;
  fill: none;
  stroke: #555;
  stroke-width: 2;
  flex: none;
}

.thumb {
  background: #cdcdcd;
}

.vscroll .thumb {
  width: 20px;
}

.vscroll .chev:last-child {
  margin-top: auto;
}

.dock .vscroll {
  width: 19px;
}

.dock .vscroll .thumb {
  width: 19px;
  height: 90%;
}

.old-hscroll {
  display: flex;
  height: 22px;
  width: 221px;
  background: #f8f8f8;
}

.old-hscroll button {
  width: 22px;
  border: 1px solid #888;
  background: #f0f0f0;
  font-size: 10px;
}

.old-hscroll button:last-child {
  margin-left: auto;
}

.old-hscroll .thumb {
  width: 77px;
  background: #f0f0f0;
  border: 1px solid #999;
  border-left: none;
}

/* dock tabs */
.tabs {
  display: flex;
  align-items: flex-start;
  height: 28px;
  margin-right: -6px;
}

.tab {
  display: flex;
  align-items: center;
  gap: 7px;
  height: 25px;
  padding: 0 8px 0 6px;
  border: 2px solid #8a8a8a;
  border-top: none;
  border-radius: 0 0 4px 4px;
  white-space: nowrap;
}

.tab.active {
  height: 28px;
  padding-top: 2px;
  border-right: none;
  border-left: 1px solid #fff;
}

.tab svg {
  width: 20px;
  height: 18px;
}

/* map view */
.view {
  display: flex;
  flex-direction: column;
  flex: 1;
  min-width: 0;
  background: #e3e3e3;
}

.top-row {
  display: flex;
  padding: 2px 2px 0 0;
}

.corner {
  width: 35px;
  height: 34px;
  margin-right: 9px;
  padding: 7px 8px;
  background: #f0f0f0;
  border-right: 2px solid #b0b0b0;
  border-bottom: 2px solid #b0b0b0;
  flex: none;
}

.corner::before {
  content: "";
  display: block;
  width: 18px;
  height: 18px;
  border-left: 4px solid #000;
  border-bottom: 5px solid #000;
}

.ruler-top {
  flex: 1;
  min-width: 0;
  height: 35px;
  background: #f0f0f0;
}

.ruler-left {
  width: 36px;
  height: auto;
  margin-right: 8px;
  background: #f0f0f0;
  flex: none;
}

.ruler-top text,
.ruler-left text {
  font-family: "Liberation Mono", monospace;
  font-size: 14px;
  fill: #222;
}

.mid-row {
  display: flex;
  flex: 1;
  min-height: 0;
  margin-top: 8px;
  padding-right: 2px;
}

.map-col {
  display: flex;
  flex-direction: column;
  flex: 1;
  min-width: 0;
}

.map-row {
  display: flex;
  flex: 1;
  min-height: 0;
}

.map {
  flex: 1;
  min-width: 0;
  overflow: hidden;
  background: #a2a2a2;
}

.map canvas {
  display: block;
}

.map-row .thumb {
  height: 21px;
  margin-top: 19px;
}

.hscroll .chev:last-child {
  margin: 0 27px 0 auto;
}

.hscroll .thumb {
  width: 22px;
  height: 19px;
  margin-left: 42%;
}

.hscroll .chev:first-child {
  margin: 0 6px;
}

/* status bar */
.status {
  display: flex;
  align-items: center;
  gap: 3px;
  height: 22px;
  margin-top: 4px;
  padding-left: 1px;
  background: #f0f0f0;
  flex: none;
}

.status-text {
  margin-right: auto;
}

.pane {
  display: flex;
  align-items: center;
  gap: 4px;
  height: 21px;
  padding-left: 2px;
  border-top: 1px solid #a0a0a0;
  border-left: 1px solid #a0a0a0;
  border-right: 1px solid #fff;
  white-space: nowrap;
  overflow: hidden;
}

.pane-state {
  width: 136px;
}

.pane-coord {
  width: 276px;
  gap: 11px;
}

.pane-layer {
  width: 132px;
}

.pane-small {
  width: 36px;
}

.pane-last {
  width: 46px;
}

/* merge dialog */
.overlay {
  position: absolute;
  inset: 0 0 40px 0;
  display: flex;
  align-items: center;
  justify-content: center;
  pointer-events: none;
}

.dialog {
  width: 477px;
  background: #f0f0f0;
  border: 1px solid #555;
  box-shadow: 0 5px 18px rgba(0,0,0,0.45);
  pointer-events: auto;
}

.dialog-title {
  display: flex;
  align-items: center;
  justify-content: space-between;
  height: 32px;
  padding: 0 15px 0 4px;
  background: #fff;
  color: #000;
}

.dialog-title svg {
  display: block;
  stroke: #000;
}

.dialog-body {
  padding: 6px 20px 23px 17px;
  font-size: 20px;
  line-height: 24px;
}

.dialog fieldset {
  margin: 0 1px 0 0;
  padding: 6px 15px 9px 11px;
  border: 1px solid #b4b4b4;
  box-shadow: 0 1px #fff;
}

.dialog legend {
  padding: 0 4px 0 1px;
}

.field {
  display: flex;
  align-items: center;
  height: 30px;
}

.field + .field {
  height: 27px;
  margin-top: 6px;
}

.field label {
  width: 76px;
  flex: none;
}

.field input {
  height: 27px;
  border: 1px solid #e0e0e0;
  border-top: 2px solid #808080;
  border-left: 2px solid #808080;
  background: #fff;
}

.field .source {
  width: 121px;
  background: #f0f0f0;
}

.field .fname {
  flex: 1;
  min-width: 0;
}

.btn {
  border: 2px solid;
  border-color: #fff #777 #777 #fff;
  background: #f0f0f0;
}

.btn-save {
  width: 106px;
  height: 30px;
  margin-left: auto;
}

.list-label {
  display: block;
  margin: 11px 0 5px;
}

.merge-row {
  display: flex;
  align-items: flex-end;
  justify-content: space-between;
}

.listbox {
  display: flex;
  width: 286px;
  height: 102px;
  border: 1px solid #fff;
  border-top: 2px solid #808080;
  border-left: 2px solid #808080;
}

.listbox select {
  flex: 1;
  min-width: 0;
  height: 99px;
  padding: 0;
  border: none;
  outline: none;
  background: #fff;
  color: #000;
  overflow: hidden;
  scrollbar-width: none;
}

.listbox option {
  display: flex;
  align-items: center;
  height: 20px;
  min-height: 20px;
  padding: 0 0 0 3px;
  font: bold 17px/17px "Liberation Sans", "Noto Sans CJK SC", sans-serif;
}

.listbox option:checked {
  background: #0078d7 linear-gradient(#0078d7, #0078d7);
  color: #fff;
}

.listbox .vscroll {
  width: 21px;
}

.listbox .chev {
  margin: 6px;
}

.listbox .thumb {
  height: 21px;
}

.actions {
  position: relative;
  display: flex;
  flex-direction: column;
  gap: 4px;
  width: 118px;
}

.actions .btn {
  height: 36px;
}

.actions .btn-default {
  border-color: #888 #666 #666 #888;
  box-shadow: inset 1px 1px #fff;
}

.box-art {
  position: absolute;
  left: 65px;
  top: -51px;
  width: 60px;
  height: 58px;
}

.check-row {
  display: flex;
  align-items: center;
  gap: 10px;
  margin-top: 12px;
}

.check-row input {
  appearance: none;
  width: 15px;
  height: 15px;
  margin: 0;
  background: #fff;
  border: 1px solid #ddd;
  border-top: 2px solid #808080;
  border-left: 2px solid #808080;
  flex: none;
}

.check-row input:checked::before {
  content: "";
  display: block;
  width: 5px;
  height: 9px;
  margin-left: 3px;
  border-right: 2px solid #000;
  border-bottom: 2px solid #000;
  transform: rotate(45deg);
}

.check-row label {
  width: 293px;
  overflow: hidden;
  white-space: nowrap;
}

/* task bar */
.taskbar {
  display: flex;
  height: 38px;
  background: linear-gradient(90deg, #20373f, #20343f 60%, #1a2843);
  color: #fff;
  flex: none;
}

.start {
  width: 45px;
  flex: none;
}

.start svg {
  width: 20px;
  height: 20px;
  display: block;
  margin: 0 auto;
}

.search {
  display: flex;
  align-items: center;
  width: 323px;
  padding: 0 5px 0 15px;
  background: #f2f2f2;
  border: 1px solid #ccc;
  border-left: none;
  color: #222;
  flex: none;
}

.search-ico {
  width: 20px;
  height: 20px;
  fill: none;
  stroke: #222;
  stroke-width: 1.5;
  flex: none;
}

.search input {
  flex: 1;
  min-width: 0;
  margin-left: 15px;
  padding: 0;
  border: none;
  background: none;
  font-size: 19px;
}

.search-art {
  width: 68px;
  height: 33px;
  align-self: flex-end;
  flex: none;
}

.tasks {
  display: flex;
  gap: 11px;
  margin-left: 9px;
}

.task {
  display: flex;
  align-items: center;
  gap: 5px;
  width: 87px;
  padding-left: 2px;
  border-bottom: 3px solid #76b9ed;
  white-space: nowrap;
}

.task.active {
  background: #4d626a;
  box-shadow: -5px 0 #4d626a, 5px 0 #4d626a;
}

.task svg {
  width: 20px;
  height: 20px;
  flex: none;
}

.tray {
  display: flex;
  align-items: center;
  gap: 10px;
  margin-left: auto;
  padding-right: 31px;
}

.tray svg {
  width: 20px;
  height: 20px;
}

.ime {
  font-size: 18px;
}

.clock {
  margin: 0 23px 0 13px;
}

.watermark {
  position: absolute;
  right: 2px;
  bottom: 14px;
  font-family: "Liberation Sans", sans-serif;
  font-size: 35px;
  line-height: 36px;
  color: rgba(225,225,230,0.7);
  text-shadow: 0 0 2px rgba(60,60,70,0.7);
  pointer-events: none;
}
```
FILE: script.js
```js
const SVG_NS = 'http://www.w3.org/2000/svg';

// "|" is a separator, "v" a drop-down arrow, a leading "*" a pressed button
const toolGroups = [
  'new newdoc open | save save save undo help *gis print',
  'flag v flaga aa flagw | cutpt node copy text pager gridr',
  'area areacut arccut arcmove arcadd arearep areagrid areahatch areaempty',
  'line v cut linecut lineadd linemove linepage linegrid | contour contgrid | topocut topocut2',
  'zoomin zoomout 1:1 spray hand cursor screen | pickpt pickline pickarea pagep gridp pickall | up down top bottom'
];

document.getElementById('toolbar').innerHTML = toolGroups.map(group => {
  const items = group.split(' ').map(name => {
    if (name === '|') return '<span class="tool-sep"></span>';
    if (name === 'v') return '<button class="tool tool-drop" aria-label="更多"><svg viewBox="0 0 12 12"><path d="M0 3h12l-6 6z"/></svg></button>';
    if (name === '1:1') return '<button class="tool">1:1</button>';
    const pressed = name[0] === '*';
    const id = name.replace('*', '');
    return `<button class="tool${pressed ? ' pressed' : ''}" aria-label="${id}"><svg><use href="#i-${id}"/></svg></button>`;
  }).join('');
  return `<div class="tool-group">${items}</div>`;
}).join('');

const rows = [];
for (let n = 2; n <= 39; n++) {
  const label = `LDZOFBB001 (${n})` + (n < 10 ? '.WP' : '...');
  rows.push(`<li><input type="checkbox" aria-label="${label}"><span class="file-name"><svg><use href="#i-doc"/></svg>${label}</span><svg class="file-state"><use href="#i-edit"/></svg></li>`);
}
document.getElementById('files').innerHTML = rows.join('');

const tasks = [
  ['folder', '文件资...'],
  ['rocket', 'MAPG...'],
  ['app', '图形编...', true],
  ['edge', '附件 ...'],
  ['360', '360安...'],
  ['lens', '无标题...'],
  ['mapgis', 'MAPG...'],
  ['xizang', '西藏接...'],
  ['baidu', '欢迎使...'],
  ['excel', 'Micro...'],
  ['note', '字体使...'],
  ['ding', '钉钉']
];
document.getElementById('tasks').innerHTML = tasks.map(([icon, text, active]) =>
  `<button class="task${active ? ' active' : ''}"><svg><use href="#i-${icon}"/></svg>${text}</button>`
).join('');

// rulers: ten ticks every five units
const STEP = 22.72;

function add(parent, tag, attrs, text) {
  const el = document.createElementNS(SVG_NS, tag);
  for (const key in attrs) el.setAttribute(key, attrs[key]);
  if (text) el.textContent = text;
  parent.appendChild(el);
}

function tickLength(i) {
  if (i % 10 === 0) return 10;
  return i % 5 === 0 ? 8 : 5;
}

function drawTopRuler() {
  const svg = document.getElementById('rulerTop');
  const width = svg.clientWidth;
  add(svg, 'rect', { x: 0, y: 21, width: width, height: 2, fill: '#a0a0a0' });
  add(svg, 'rect', { x: 0, y: 23, width: width, height: 12, fill: '#fff' });
  for (let i = -2; 62 + i * STEP < width - 5; i++) {
    const x = Math.round(62 + i * STEP);
    const len = tickLength(i);
    add(svg, 'rect', { x: x, y: 35 - len, width: 1, height: len, fill: '#00f' });
    if (i % 10 === 0) {
      add(svg, 'text', { x: x, y: 14 }, (75 + i / 2).toFixed(1));
    }
  }
  add(svg, 'rect', { x: 7, y: 22, width: 1, height: 13, fill: '#f0f' });
}

function drawLeftRuler() {
  const svg = document.getElementById('rulerLeft');
  const height = svg.clientHeight;
  add(svg, 'rect', { x: 22, y: 0, width: 2, height: height, fill: '#a0a0a0' });
  add(svg, 'rect', { x: 24, y: 0, width: 12, height: height, fill: '#fff' });
  for (let i = -8; 195 + i * STEP < height; i++) {
    const y = Math.round(195 + i * STEP);
    const len = tickLength(i);
    add(svg, 'rect', { x: 36 - len, y: y, width: len, height: 1, fill: '#00f' });
    if (i % 10 === 0) {
      add(svg, 'text', { transform: `translate(15 ${y - 1}) rotate(-90)` }, (40 - i / 2).toFixed(1));
    }
  }
  add(svg, 'rect', { x: 14, y: 328, width: 22, height: 1, fill: '#c3c' });
}

drawTopRuler();
drawLeftRuler();

// geological sheets, coloured by stretched value noise
const mapBox = document.getElementById('map');
const canvas = document.getElementById('mapCanvas');
canvas.width = mapBox.clientWidth;
canvas.height = mapBox.clientHeight;
const ctx = canvas.getContext('2d');

function hash(x, y, seed) {
  let h = (x * 374761393 + y * 668265263 + seed * 974711) | 0;
  h = Math.imul(h ^ (h >>> 13), 1274126177);
  return ((h ^ (h >>> 16)) >>> 0) / 4294967296;
}

function noise(x, y, seed) {
  const xi = Math.floor(x);
  const yi = Math.floor(y);
  const fx = x - xi;
  const fy = y - yi;
  const a = hash(xi, yi, seed) * (1 - fx) + hash(xi + 1, yi, seed) * fx;
  const b = hash(xi, yi + 1, seed) * (1 - fx) + hash(xi + 1, yi + 1, seed) * fx;
  return a * (1 - fy) + b * fy;
}

// area: [x, y, width, height]; gap: share left blank; deg: direction of the bands
function sheet(area, colors, gap, deg, long, wide, seed, clip) {
  const [x0, y0, w, h] = area;
  const cos = Math.cos(deg * Math.PI / 180);
  const sin = Math.sin(deg * Math.PI / 180);
  ctx.save();
  if (clip) {
    ctx.beginPath();
    clip.forEach(([x, y]) => ctx.lineTo(x, y));
    ctx.clip();
  }
  for (let y = y0; y < y0 + h; y++) {
    for (let x = x0; x < x0 + w; x++) {
      const u = (x * cos + y * sin) / long;
      const v = (y * cos - x * sin) / wide;
      const hole = noise(u * 3, v * 2, seed + 7) * 0.6 + noise(x / 2, y / 2, seed + 3) * 0.4;
      if (hole < gap) continue;
      let n = noise(u, v, seed) * 0.75 + noise(x / 3, y / 2, seed + 1) * 0.25;
      n = Math.min(0.999, Math.max(0, (n - 0.5) * 1.7 + 0.5));
      ctx.fillStyle = colors[Math.floor(n * colors.length)];
      ctx.fillRect(x, y, 1, 1);
    }
  }
  ctx.restore();
}

function shape(color, points) {
  ctx.fillStyle = color;
  ctx.beginPath();
  points.forEach(([x, y]) => ctx.lineTo(x, y));
  ctx.fill();
}

sheet([231, 468, 45, 19], ['#00d0ff', '#80ffff', '#00c8ff', '#ffffa0', '#ffe8d0'], 0.44, 10, 12, 3, 1);
sheet([274, 468, 62, 22], ['#d8d8d8', '#ffffcc', '#dcdcdc', '#ffff80', '#a0c8ff'], 0.32, 15, 26, 4, 2);
sheet([334, 468, 72, 44], ['#ffffcc', '#ffc880', '#ffffcc', '#ffb868', '#ffff90'], 0.38, 20, 12, 5, 3);
sheet([236, 487, 125, 25], ['#00ffff', '#ffffcc', '#ffffcc', '#80ffff', '#fff8c0', '#00d8ff'], 0.36, 12, 20, 4, 4, [[236, 487], [361, 487], [361, 512], [249, 512], [249, 500]]);
sheet([402, 422, 4, 46], ['#ffffc0', '#d8d0f0'], 0.35, 90, 8, 3, 5);

sheet([882, 422, 133, 46], ['#ffccff', '#ffd4ff', '#ffccff', '#ffff50', '#ffccff'], 0.3, 30, 20, 5, 6);
sheet([882, 422, 45, 46], ['#ffff00', '#ffff60', '#ffff30', '#ffff00', '#ffb800'], 0.28, 30, 24, 6, 7, [[882, 422], [915, 422], [927, 445], [925, 468], [882, 468]]);
sheet([884, 440, 38, 22], ['#a0ff20', '#b0ff30', '#ffff20'], 0.42, 35, 16, 4, 28, [[884, 440], [900, 442], [922, 458], [918, 464], [900, 452]]);
sheet([882, 468, 80, 44], ['#ffff00', '#ffff60', '#e8c800', '#ffff30', '#ffb000'], 0.33, 30, 16, 4, 8);
sheet([955, 468, 60, 44], ['#ffccff', '#ffccff', '#ffc8f0', '#e8c800', '#ffb000', '#ffccff'], 0.32, 32, 18, 4, 29);
sheet([882, 500, 60, 12], ['#a0ffe8', '#ffccff', '#ffb000', '#ffff60'], 0.36, 25, 12, 4, 9);
sheet([1014, 468, 69, 44], ['#ffccff', '#ffccff', '#ffccff', '#ffccff', '#ffff50'], 0.27, 32, 28, 6, 10);
sheet([1018, 478, 40, 34], ['#c8c8c8', '#b8b8b8'], 0.3, 40, 20, 5, 37, [[1014, 480], [1028, 482], [1062, 512], [1050, 512]]);
sheet([1082, 468, 73, 44], ['#fff2ee', '#fff2ee', '#f8eaff', '#ffffb0'], 0.38, 30, 10, 5, 11);
sheet([1154, 468, 134, 44], ['#ffb0ff', '#ffccff', '#ffc4ff', '#ffb0ff', '#ffff60'], 0.24, 45, 36, 7, 12);
shape('#e0d820', [[1244, 468], [1288, 468], [1288, 483], [1264, 480], [1250, 473]]);
sheet([1287, 468, 70, 44], ['#ffff80', '#ffff80', '#ffff80', '#ff9fb0', '#ffff80', '#ff9fb0'], 0.33, 60, 10, 5, 13);
sheet([1330, 468, 27, 44], ['#ff9f9f', '#ff90b0', '#ffb0c0', '#ffff80'], 0.3, 60, 10, 5, 14);
sheet([1357, 468, 67, 44], ['#f0d0d8', '#f4b0b0', '#f0d8dc', '#e8b0ff', '#f0d0d8'], 0.16, 35, 60, 8, 15);
sheet([1357, 468, 67, 30], ['#b0ff00', '#c8ff00', '#ffc890'], 0.2, 30, 30, 5, 16, [[1357, 468], [1374, 468], [1424, 492], [1424, 498], [1400, 490]]);
sheet([1362, 495, 30, 17], ['#ffff00', '#c8f000', '#fff0b0'], 0.3, 30, 10, 4, 17, [[1362, 497], [1392, 508], [1394, 512], [1362, 512]]);
shape('#e87818', [[1424, 501], [1414, 502], [1404, 509], [1412, 512], [1424, 510]]);

shape('#d08000', [[1424, 515], [1438, 513], [1456, 512], [1442, 517], [1434, 521], [1425, 520]]);
sheet([1424, 513, 69, 45], ['#d0c060', '#e09040', '#ff90f0', '#c8b840', '#80b0b0'], 0.34, -30, 20, 4, 18, [[1424, 538], [1456, 522], [1468, 513], [1493, 513], [1493, 546], [1424, 556]]);
shape('#b8f0e8', [[1430, 550], [1450, 540], [1464, 534], [1474, 543], [1493, 546], [1493, 556], [1424, 556]]);
shape('#c0e890', [[1430, 557], [1444, 548], [1462, 545], [1472, 548], [1480, 558], [1430, 558]]);

sheet([810, 604, 137, 19], ['#66ffe5', '#80ffe0', '#ffffa0', '#66ffe5', '#66ffe5', '#a0ffc0'], 0.4, -8, 16, 4, 19);
sheet([880, 604, 67, 8], ['#60e000', '#00e8ff', '#70e010'], 0.36, 5, 18, 4, 20);
sheet([882, 610, 65, 12], ['#00e8ff', '#a0ffd0', '#00e8ff'], 0.44, 5, 18, 4, 36);
sheet([810, 622, 70, 22], ['#a0d0d8', '#a0d0d8', '#ffffa0'], 0.4, 5, 16, 4, 21, [[810, 622], [880, 622], [874, 633], [830, 640]]);
sheet([878, 618, 68, 18], ['#c8c8c8', '#cfcfcf'], 0.46, 12, 30, 5, 22, [[878, 618], [920, 618], [947, 630], [947, 636], [910, 627], [878, 622]]);
sheet([810, 634, 137, 16], ['#ffffa0'], 0.78, 0, 5, 4, 38);
sheet([674, 650, 140, 31], ['#ffff80', '#80ff40', '#ffff80', '#ffffa0', '#a0ff40'], 0.57, -4, 12, 3, 23);
sheet([780, 650, 100, 32], ['#80ffff', '#80ff60', '#ffffa0', '#80ffff'], 0.54, 8, 18, 3, 24);
sheet([880, 650, 65, 18], ['#ffe0a0', '#90e8a8', '#ffd8a0'], 0.55, 12, 22, 4, 25);
sheet([674, 679, 62, 16], ['#ffff80', '#80ffd0', '#ffc8d0', '#80ff40'], 0.4, 5, 12, 3, 26);
shape('#e4b8c8', [[732, 684], [760, 684], [800, 683], [840, 685], [870, 690], [884, 695], [726, 695]]);
sheet([732, 690, 150, 5], ['#ffff80', '#ffc8d0', '#80ff80'], 0.62, 3, 8, 2, 27);
for (let i = 0; i < 60; i++) {
  // dotted rim of the empty basin
  const a = -0.9 + i * 0.035 + hash(i, 1, 30) * 0.3;
  const r = 56 + hash(i, 2, 30) * 5;
  ctx.fillStyle = '#ffffa0';
  ctx.fillRect(Math.round(885 + Math.cos(a) * r), Math.round(668 + Math.sin(a) * 25), 2, 2);
}

sheet([1015, 604, 136, 91], ['#ffccff', '#ffd4d4', '#80ffff', '#ffd4d4', '#90ffff', '#ffe030', '#ffccff'], 0.28, 58, 80, 9, 31, [[1022, 604], [1120, 604], [1138, 625], [1151, 650], [1151, 695], [1106, 695], [1080, 665], [1050, 628]]);
shape('#a2a2a2', [[1046, 606], [1072, 606], [1094, 628], [1108, 648], [1122, 690], [1114, 680], [1098, 660], [1080, 630]]);
shape('#ffccff', [[1070, 622], [1084, 632], [1102, 660], [1112, 682], [1096, 668], [1084, 650]]);
shape('#d0a0ff', [[1086, 632], [1096, 642], [1106, 664], [1098, 658]]);
sheet([1070, 604, 56, 58], ['#80ffff', '#80ffff', '#ffd4d4'], 0.22, 50, 40, 8, 39, [[1072, 604], [1092, 610], [1122, 630], [1124, 650], [1112, 662], [1098, 636]]);
sheet([1112, 630, 28, 60], ['#80ff10', '#80ff10', '#80ffa0'], 0.22, 70, 20, 6, 40, [[1114, 645], [1126, 632], [1136, 660], [1134, 690], [1122, 672]]);
shape('#ffccff', [[1108, 656], [1118, 666], [1136, 695], [1118, 695]]);
sheet([1015, 608, 95, 87], ['#ffff90', '#d8d8c8', '#90d0d0', '#e8ff80', '#ffe060', '#c8c020'], 0.48, 45, 24, 4, 32, [[1015, 610], [1040, 628], [1070, 655], [1110, 695], [1060, 695], [1015, 670]]);
sheet([1118, 604, 33, 91], ['#ff9fe0', '#ffe020', '#ffd0a0', '#ffccff'], 0.46, 75, 20, 4, 33);
sheet([1050, 694, 52, 18], ['#a0c8d0', '#ffff90', '#ff9f9f'], 0.66, 35, 16, 3, 34);
sheet([1010, 700, 60, 40], ['#ffffa0'], 0.82, 0, 4, 4, 35);

shape('#ffb0b0', [[962, 700], [985, 706], [1006, 718], [1025, 729], [1005, 726], [985, 730], [966, 735], [958, 715]]);
shape('#ff9090', [[966, 706], [980, 712], [992, 726], [976, 730], [964, 720]]);
shape('#a2a2a2', [[982, 710], [994, 714], [998, 720], [990, 721]]);
shape('#ffd0d0', [[954, 704], [958, 706], [960, 726], [974, 730], [966, 735], [947, 741], [947, 736], [953, 730]]);
shape('#a0d0d8', [[947, 741], [975, 732], [990, 728], [966, 739], [947, 742]]);
shape('#d8d8c8', [[947, 742], [975, 735], [970, 743], [947, 748]]);
shape('#ffe880', [[947, 748], [980, 733], [1005, 725], [988, 738], [970, 748], [947, 758]]);
shape('#90ff10', [[964, 695], [990, 702], [1015, 714], [1012, 717], [985, 706], [964, 698]]);
shape('#80ff80', [[1012, 717], [1016, 714], [1034, 726], [1040, 736], [1022, 728]]);
shape('#ff8080', [[1014, 727], [1024, 729], [1018, 732]]);
```
